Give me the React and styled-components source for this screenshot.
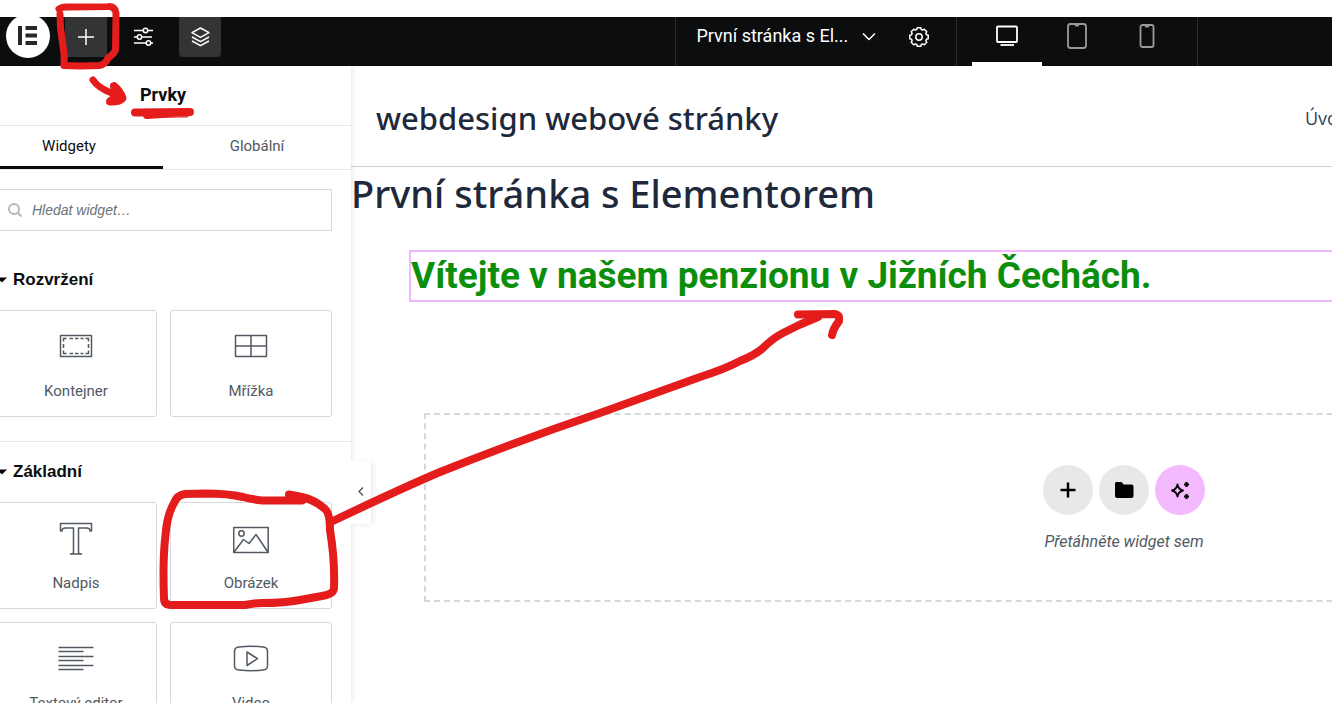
import React, { useState } from "react";
import styled, { createGlobalStyle } from "styled-components";

const GlobalStyle = createGlobalStyle`
  * {
    box-sizing: border-box;
  }

  body {
    margin: 0;
    background: #fff;
    font-family: Roboto, "Liberation Sans", sans-serif;
  }

  button {
    border: 0;
    padding: 0;
    background: none;
    font: inherit;
    color: inherit;
    cursor: pointer;
  }
`;

const Frame = styled.div`
  position: relative;
  height: 100vh;
  overflow: hidden;
`;

/* the editor runs past both edges of the window */
const Editor = styled.div`
  display: flex;
  flex-direction: column;
  height: 100%;
  margin: 0 -565px 0 -25px;
  padding-top: 17px;
`;

const TopBar = styled.header`
  display: grid;
  grid-template-columns: 1fr auto auto 1fr;
  flex: none;
  height: 49px;
  background: #0c0d0e;
  color: #fff;
`;

const Tools = styled.div`
  display: flex;
  align-items: flex-start;
  gap: 15px;
  padding-left: 31px;
`;

const Logo = styled.a`
  display: flex;
  width: 44px;
  height: 44px;
  margin-top: -3px;
  border-radius: 50%;
  background: #fff;
`;

const ToolButton = styled.button`
  display: flex;
  align-items: center;
  justify-content: center;
  width: 42px;
  height: 40px;
  border-radius: 0 0 4px 4px;
  background: ${(props) => (props.$active ? "#333436" : "transparent")};
`;

const DocumentBar = styled.div`
  display: flex;
  align-items: flex-start;
  justify-content: space-between;
  width: 281px;
  padding: 0 16px 0 21px;
  border-left: 1px solid #2b2c2e;
`;

const DocumentTitle = styled.button`
  display: flex;
  align-items: center;
  gap: 14px;
  height: 38px;
  font-size: 18px;
  line-height: 20px;
`;

const Devices = styled.div`
  display: flex;
  padding: 0 15px;
  border: solid #2b2c2e;
  border-width: 0 1px;
`;

const Device = styled.button`
  display: flex;
  justify-content: center;
  width: 70px;
  padding-top: 4px;
  color: ${(props) => (props.$active ? "#fff" : "#9a9b9d")};
  border-bottom: 4px solid ${(props) => (props.$active ? "#fff" : "transparent")};
`;

const Workspace = styled.div`
  display: flex;
  flex: 1;
  min-height: 0;
`;

const Panel = styled.aside`
  position: relative;
  z-index: 1;
  flex: none;
  width: 376px;
  background: #fff;
  box-shadow: 1px 0 5px rgba(0, 0, 0, 0.1);
`;

const PanelTitle = styled.h2`
  margin: 0;
  height: 60px;
  padding-top: 17px;
  border-bottom: 1px solid #e6e8ea;
  font-size: 18px;
  line-height: 24px;
  font-weight: 700;
  text-align: center;
  color: #0c0d0e;
`;

const Tabs = styled.div`
  display: flex;
  height: 44px;
  border-bottom: 1px solid #e6e8ea;
`;

const Tab = styled.button`
  flex: 1;
  font-size: 15px;
  color: ${(props) => (props.$active ? "#0c0d0e" : "#515962")};
  border-bottom: 3px solid ${(props) => (props.$active ? "#0c0d0e" : "transparent")};
`;

const SearchBox = styled.label`
  display: flex;
  align-items: center;
  gap: 10px;
  height: 42px;
  margin: 19px 19px 19px 20px;
  padding-left: 12px;
  border: 1px solid #d5d8dc;
  color: #b5bac0;

  input {
    flex: 1;
    min-width: 0;
    border: 0;
    padding: 0;
    outline: 0;
    background: none;
    font: italic 14px "Liberation Sans", Arial, sans-serif;
    color: #3f444b;
  }

  input::placeholder {
    color: #69727d;
    opacity: 1;
  }
`;

const Category = styled.section`
  padding: 0 19px 24px 20px;
  border-bottom: 1px solid #e6e8ea;
`;

const CategoryTitle = styled.button`
  display: flex;
  align-items: center;
  gap: 6px;
  height: 60px;
  padding-left: 2px;
  font-family: "Liberation Sans", Arial, sans-serif;
  font-size: 17px;
  font-weight: 700;
  color: #0c0d0e;
`;

const WidgetGrid = styled.div`
  display: grid;
  grid-template-columns: 1fr 1fr;
  gap: 13px;
`;

const WidgetCard = styled.button`
  display: flex;
  flex-direction: column;
  align-items: center;
  gap: 16px;
  height: 107px;
  padding-top: 18px;
  border: 1px solid #d5d8dc;
  border-radius: 3px;
  font-size: 15px;
  line-height: 20px;
  color: #515962;
`;

const CollapseButton = styled.button`
  position: absolute;
  top: 395px;
  left: 100%;
  width: 20px;
  height: 63px;
  background: #fff;
  color: #515962;
  box-shadow: 3px 1px 5px rgba(0, 0, 0, 0.07);
`;

const Canvas = styled.main`
  flex: 1;
  min-width: 0;
  color: #1e293b;
  font-family: "Noto Sans", sans-serif;
`;

const SiteHeader = styled.div`
  display: flex;
  align-items: center;
  justify-content: space-between;
  height: 101px;
  padding-left: 25px;
  padding-top: 3px;
  border-bottom: 1px solid #cdd1d6;
`;

const SiteName = styled.div`
  font-size: 31px;
  line-height: 44px;
  font-weight: 500;
`;

const SiteNav = styled.nav`
  min-width: 592px;
  font-family: "Open Sans", sans-serif;
  font-size: 18px;

  a {
    color: #334155;
    text-decoration: none;
  }
`;

const PageTitle = styled.h1`
  margin: 0;
  font-size: 38px;
  line-height: 52px;
  font-weight: 500;
`;

const PageBody = styled.div`
  padding: 31px 58px 0;
  font-family: Roboto, sans-serif;
`;

const HeadingWidget = styled.h2`
  margin: 0;
  border: 2px solid #f0b9fb;
  font-size: 37px;
  line-height: 48px;
  font-weight: 700;
  color: #0b8e0b;
`;

const DropZone = styled.div`
  display: flex;
  flex-direction: column;
  align-items: center;
  gap: 17px;
  height: 189px;
  margin: 111px 15px 0;
  padding-top: 50px;
  border: 2px dashed #d5d8dc;
  font-size: 16px;
  line-height: 20px;
  font-style: italic;
  color: #515962;
`;

const DropActions = styled.div`
  display: flex;
  gap: 6px;
`;

const RoundButton = styled.button`
  display: flex;
  align-items: center;
  justify-content: center;
  width: 50px;
  height: 50px;
  border-radius: 50%;
  background: ${(props) => (props.$ai ? "#f3bafd" : "#e6e8ea")};
  color: #000;
`;

const Marker = styled.svg`
  position: absolute;
  top: 0;
  left: 0;
  z-index: 2;
  pointer-events: none;
`;

function Icon({ width = 24, height = 24, stroke = 1.5, children }) {
  return (
    <svg
      width={width}
      height={height}
      viewBox={`0 0 ${width} ${height}`}
      fill="none"
      stroke="currentColor"
      strokeWidth={stroke}
      strokeLinejoin="round"
      aria-hidden="true"
    >
      {children}
    </svg>
  );
}

// outline of the gear: eight teeth round (12, 12)
function gearPath() {
  const points = [];
  for (let i = 0; i < 8; i++) {
    [[-11, 9.4], [11, 9.4], [17, 7.8], [28, 7.8]].forEach(([offset, radius]) => {
      const angle = ((i * 45 + offset) * Math.PI) / 180;
      points.push(`${(12 + radius * Math.cos(angle)).toFixed(2)} ${(12 + radius * Math.sin(angle)).toFixed(2)}`);
    });
  }
  return `M${points.join("L")}Z`;
}

const widgetIcons = {
  container: (
    <>
      <path d="M2.500 6.500h31v21h-31z" />
      <path d="M5.500 12.500v-3h3M27.500 9.500h3v3M30.500 21.500v3h-3M8.500 24.500h-3v-3M11.500 9.500h3.500M17 9.500h3.500M22.500 9.500h3M11.500 24.500h3.500M17 24.500h3.500M22.500 24.500h3M5.500 15v4M30.500 15v4" />
    </>
  ),
  grid: <path d="M2.500 6.500h31v21h-31zM18 6.500v21M2.500 17h31" />,
  heading: (
    <path d="M2.500 2.500h31v7.500h-1.500c0-2-1-3-3.500-3h-8v24.500c0 1 1 1.500 3 1.500h-11c2 0 3-.5 3-1.500V7h-8C5 7 4 8 4 10H2.500z" />
  ),
  image: (
    <>
      <path d="M.7 6.500h34.500v25H.7zM.7 31.500l9.800-13 5.500 4 7-9 12.200 18" />
      <circle cx="8.500" cy="12.500" r="2.700" />
    </>
  ),
  text: <path d="M.5 6.500h35M.5 10.500h25M.5 15.500h35M.5 19.500h25M.5 24.500h35M.5 28.500h25" />,
  video: (
    <>
      <path d="M6 6q12-1.500 24 0 4.500.5 4.500 4v15q0 3.500-4.500 4-12 1.500-24 0-4.500-.5-4.500-4V10q0-3.500 4.500-4z" />
      <path d="M14 11v13.500l10.500-6.800z" />
    </>
  ),
};

const categories = [
  {
    title: "Rozvržení",
    widgets: [
      { icon: "container", label: "Kontejner" },
      { icon: "grid", label: "Mřížka" },
    ],
  },
  {
    title: "Základní",
    widgets: [
      { icon: "heading", label: "Nadpis" },
      { icon: "image", label: "Obrázek" },
      { icon: "text", label: "Textový editor" },
      { icon: "video", label: "Video" },
    ],
  },
];

function EditorTopBar() {
  const [device, setDevice] = useState("desktop");

  return (
    <TopBar>
      <Tools>
        <Logo href="#" aria-label="Elementor">
          <svg width="44" height="44" viewBox="0 0 44 44" fill="#26282b" aria-hidden="true">
            <path d="M12 12h4v19h-4zM19.500 12H31v4H19.500zM19.500 19.500H31v4H19.500zM19.500 27H31v4H19.500z" />
          </svg>
        </Logo>
        <ToolButton $active aria-label="Přidat prvek">
          <Icon>
            <path d="M12 4v16M4 12h16" />
          </Icon>
        </ToolButton>
        <ToolButton aria-label="Nastavení webu">
          <Icon>
            <path d="M3 5.500h9M17 5.500h5M3 12h3M11 12h10M3 18h12M20 18h2" />
            <circle cx="14.500" cy="5.500" r="2.200" />
            <circle cx="8.500" cy="12" r="2.200" />
            <circle cx="17.500" cy="18" r="2.200" />
          </Icon>
        </ToolButton>
        <ToolButton $active aria-label="Struktura">
          <Icon>
            <path d="M12.500 3l8.500 4.700-8.500 4.700L4 7.700zM4 12l8.500 4.700L21 12M4 16l8.500 4.700L21 16" />
          </Icon>
        </ToolButton>
      </Tools>
      <DocumentBar>
        <DocumentTitle>
          První stránka s El...
          <Icon width={14}>
            <path d="M1 9.500l6 6 6-6" />
          </Icon>
        </DocumentTitle>
        <ToolButton aria-label="Nastavení stránky">
          <Icon>
            <path d={gearPath()} />
            <circle cx="12" cy="12" r="3.200" />
          </Icon>
        </ToolButton>
      </DocumentBar>
      <Devices>
        <Device $active={device === "desktop"} onClick={() => setDevice("desktop")} aria-label="Počítač">
          <Icon height={30} stroke={1.8}>
            <rect x="2" y="5.500" width="20" height="15.500" rx="1" />
            <path d="M5.500 24h13.500" />
          </Icon>
        </Device>
        <Device $active={device === "tablet"} onClick={() => setDevice("tablet")} aria-label="Tablet">
          <Icon height={30} stroke={1.8}>
            <rect x="3" y="3" width="18" height="24" rx="2.500" />
            <path d="M10 4.500h4" />
          </Icon>
        </Device>
        <Device $active={device === "mobile"} onClick={() => setDevice("mobile")} aria-label="Mobil">
          <Icon height={30} stroke={1.8}>
            <rect x="5.500" y="4" width="13" height="22" rx="2" />
            <path d="M10 5.500h4" />
          </Icon>
        </Device>
      </Devices>
    </TopBar>
  );
}

function WidgetPanel() {
  const [tab, setTab] = useState("widgets");

  return (
    <Panel>
      <PanelTitle>Prvky</PanelTitle>
      <Tabs>
        <Tab $active={tab === "widgets"} onClick={() => setTab("widgets")}>
          Widgety
        </Tab>
        <Tab $active={tab === "global"} onClick={() => setTab("global")}>
          Globální
        </Tab>
      </Tabs>
      <SearchBox>
        <Icon width={14} height={14} stroke={2}>
          <circle cx="6" cy="6" r="5" />
          <path d="M9.500 9.500l4 4" />
        </Icon>
        <input type="text" placeholder="Hledat widget…" aria-label="Hledat widget" />
      </SearchBox>
      {categories.map((category) => (
        <Category key={category.title}>
          <CategoryTitle>
            <svg width="10" height="6" viewBox="0 0 10 6" aria-hidden="true">
              <path d="M0 .5h10L5 5.500z" />
            </svg>
            {category.title}
          </CategoryTitle>
          <WidgetGrid>
            {category.widgets.map((widget) => (
              <WidgetCard key={widget.label}>
                <Icon width={36} height={36}>
                  {widgetIcons[widget.icon]}
                </Icon>
                {widget.label}
              </WidgetCard>
            ))}
          </WidgetGrid>
        </Category>
      ))}
      <CollapseButton aria-label="Skrýt panel">
        <Icon width={10} height={12}>
          <path d="M7 1.500L3 5.500l4 4" />
        </Icon>
      </CollapseButton>
    </Panel>
  );
}

function SitePreview() {
  return (
    <Canvas>
      <SiteHeader>
        <SiteName>webdesign webové stránky</SiteName>
        <SiteNav>
          <a href="#">Úvod</a>
        </SiteNav>
      </SiteHeader>
      <PageTitle>První stránka s Elementorem</PageTitle>
      <PageBody>
        <HeadingWidget>Vítejte v našem penzionu v Jižních Čechách.</HeadingWidget>
        <DropZone>
          <DropActions>
            <RoundButton aria-label="Přidat kontejner">
              <Icon stroke={2.5}>
                <path d="M12 4.500v15M4.500 12h15" />
              </Icon>
            </RoundButton>
            <RoundButton aria-label="Přidat šablonu">
              <svg width="20" height="18" viewBox="0 0 20 18" aria-hidden="true">
                <path d="M2 1h5q1 0 1.500 1l1 1.500H17.500q2 0 2 2V15q0 2-2 2H3q-2 0-2-2V3q0-2 1-2z" />
              </svg>
            </RoundButton>
            <RoundButton $ai aria-label="Vytvořit pomocí AI">
              <Icon stroke={1.8}>
                <path d="M9.500 6.500q1 5 5.500 6-4.500 1-5.500 6-1-5-5.500-6 4.500-1 5.500-6z" />
                <path d="M18.500 4v5M16 6.500h5M18.500 16v5M16 18.500h5" strokeWidth="2.200" />
              </Icon>
            </RoundButton>
          </DropActions>
          Přetáhněte widget sem
        </DropZone>
      </PageBody>
    </Canvas>
  );
}

/* red pen notes over the editor */
function PenMarks() {
  return (
    <Marker
      width="860"
      height="640"
      viewBox="0 0 860 640"
      fill="none"
      stroke="#e51c1c"
      strokeWidth="8"
      strokeLinecap="round"
      strokeLinejoin="round"
      aria-hidden="true"
    >
      <path d="M59 9Q62 6.500 68 7L108 6.500Q115 6 116 13L115.500 50Q114 54 108 58Q105 65 99 65.500L80 66L64 65.500Q65 56 63 46L60.500 28L60 14" strokeWidth="7" />
      <path d="M93 80Q98 88 113 93.500L121 98" strokeWidth="7" />
      <path d="M114 86Q120 91 122.500 98Q119 102 110 101.500L117 96z" fill="#e51c1c" />
      <path d="M135 112.500L190 112M147 115Q165 113 186 113.500" />
      <path d="M302 500.500H262Q250 499 243 497Q228 493.500 205 493.500L185 494Q177 495 174 503Q167 515 165.500 535Q162.500 560 164 598Q164 605 171 605L245 605Q255 603 262 603Q285 603 300 600L322 596Q334 594 334 588Q335 560 330 530Q330 513 325 509Q315 500 302 497L289 494.500" />
      <path d="M333 521Q400 489 440 472Q520 440 600 413Q650 395 700 377Q725 369 740 361Q755 355 763 348Q773 338 783 333L799 325L818 317" />
      <path d="M798 314.500L835 314Q840 315 839 321Q833 329 832 335" />
    </Marker>
  );
}

export default function App() {
  return (
    <Frame>
      <GlobalStyle />
      <Editor>
        <EditorTopBar />
        <Workspace>
          <WidgetPanel />
          <SitePreview />
        </Workspace>
      </Editor>
      <PenMarks />
    </Frame>
  );
}
